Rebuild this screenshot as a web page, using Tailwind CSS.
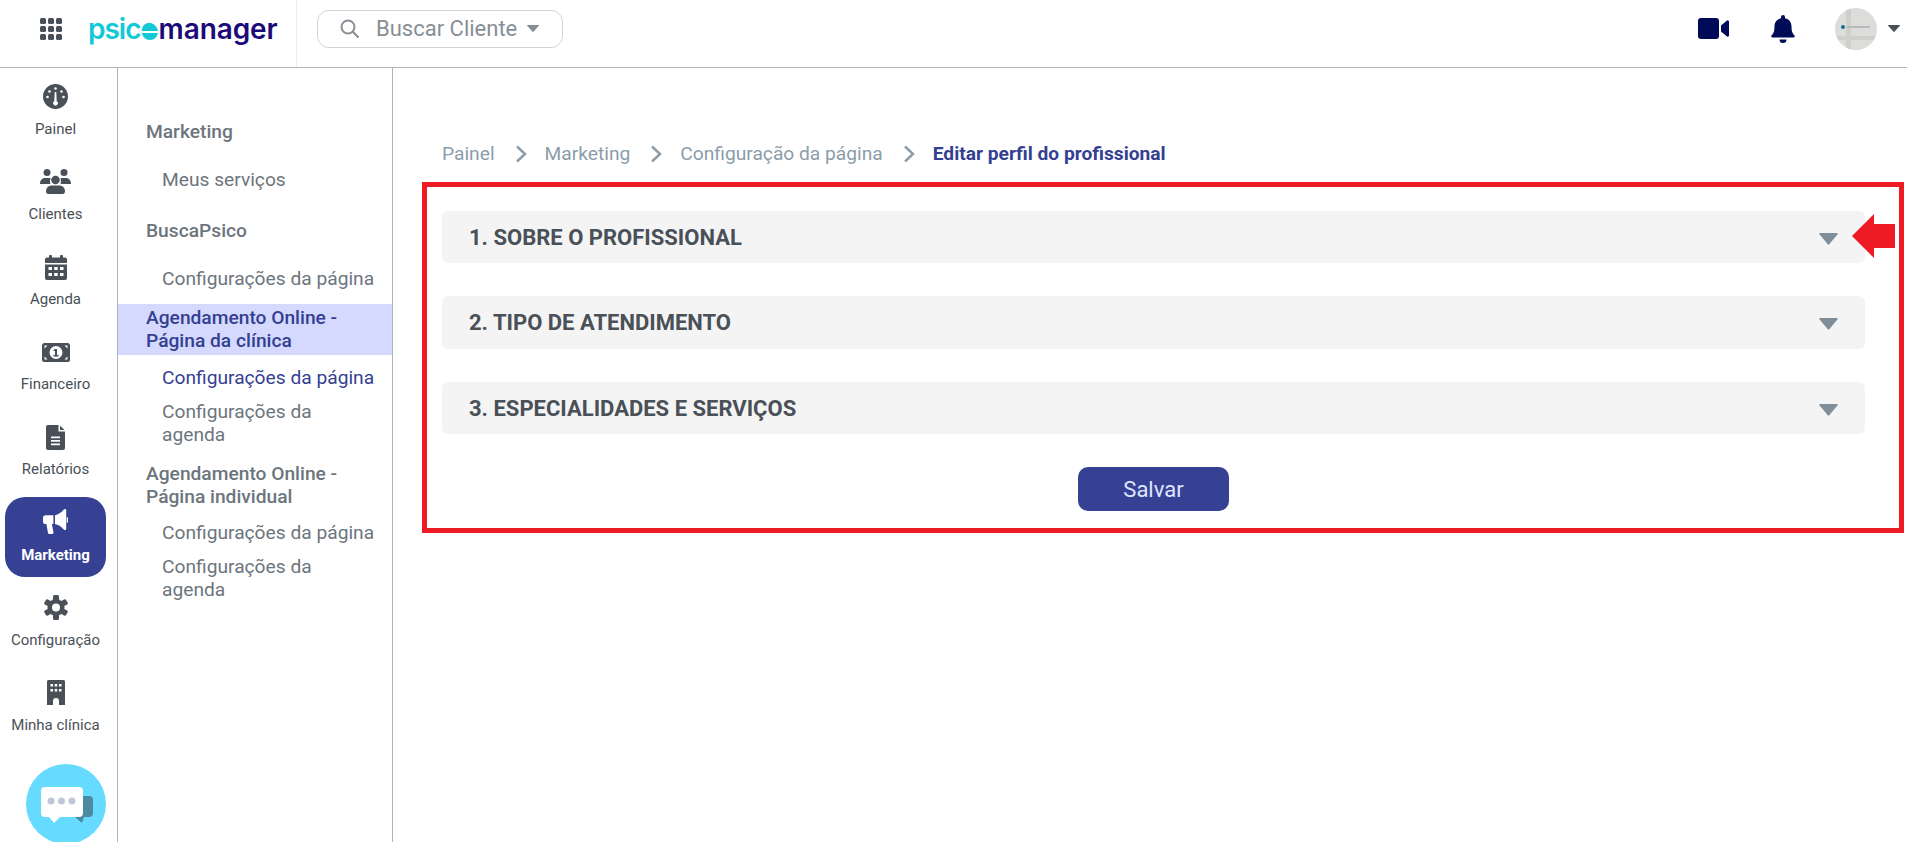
<!DOCTYPE html>
<html lang="pt-BR">
<head>
  <meta charset="UTF-8" />
  <title>PsicoManager – Editar perfil do profissional</title>
  <script src="https://cdn.jsdelivr.net/npm/@tailwindcss/browser@4"></script>
</head>
<body class="bg-white font-['Roboto',sans-serif] text-[#495057] h-[842px] overflow-hidden">

  <!-- top bar -->
  <header class="h-[68px] flex items-center border-b border-[#adb5bd] bg-white">
    <div class="w-[297px] h-full flex items-center border-r border-[#e9ecef] shrink-0 pb-[9px]">
      <svg class="ml-[40px] w-[22px] h-[22px]" viewBox="0 0 22 22" fill="#495057">
        <rect x="0" y="0" width="6" height="6" rx="1.5"/><rect x="8" y="0" width="6" height="6" rx="1.5"/><rect x="16" y="0" width="6" height="6" rx="1.5"/>
        <rect x="0" y="8" width="6" height="6" rx="1.5"/><rect x="8" y="8" width="6" height="6" rx="1.5"/><rect x="16" y="8" width="6" height="6" rx="1.5"/>
        <rect x="0" y="16" width="6" height="6" rx="1.5"/><rect x="8" y="16" width="6" height="6" rx="1.5"/><rect x="16" y="16" width="6" height="6" rx="1.5"/>
      </svg>
      <div class="ml-[26px] flex items-baseline font-['Inter',sans-serif] font-semibold text-[28px] leading-none">
        <span class="text-[#12c9d8] tracking-[-1px]">psic</span>
        <span class="relative text-[#12c9d8] mr-[1px]">o<span class="absolute left-[1px] top-[9px] w-[16px] h-[16px] rounded-full bg-[#12c9d8] flex items-center"><span class="block w-full h-[2px] bg-white"></span></span></span>
        <span class="text-[#1c0a78] tracking-[-0.1px]">manager</span>
      </div>
    </div>
    <button class="ml-[20px] mb-[10px] w-[246px] h-[38px] border border-[#ced4da] rounded-[12px] flex items-center text-[#868e96] text-[22px]">
      <svg class="ml-[22px] w-[19px] h-[19px]" viewBox="0 0 19 19" fill="none" stroke="#868e96" stroke-width="2"><circle cx="8" cy="8" r="6.5"/><path d="M12.8 12.8 18 18" stroke-linecap="round"/></svg>
      <span class="ml-[17px]">Buscar Cliente</span>
      <svg class="ml-[10px] w-[12px] h-[7px]" viewBox="0 0 12 7" fill="#868e96"><path d="M0.5 0h11a.5.5 0 0 1 .4.8L6.4 6.8a.5.5 0 0 1-.8 0L.1.8A.5.5 0 0 1 .5 0z"/></svg>
    </button>
    <div class="ml-auto mb-[10px] flex items-center">
      <svg class="w-[31px] h-[21px]" viewBox="0 0 31 21" fill="#000b57"><rect x="0" y="0" width="21" height="21" rx="3"/><path d="M23 7.5 29 2.6a1.2 1.2 0 0 1 2 .9v14a1.2 1.2 0 0 1-2 .9L23 13.5z"/></svg>
      <svg class="ml-[42px] w-[24px] h-[28px]" viewBox="0 0 24 28" fill="#000b57"><path d="M12 0a2 2 0 0 1 2 2v1.200c4 .8 6.500 4 6.500 8.300 0 5.800 1.600 7.400 3 9 .5.6.5 2-1 2H1.500c-1.500 0-1.500-1.400-1-2 1.400-1.600 3-3.200 3-9 0-4.300 2.500-7.500 6.500-8.300V2a2 2 0 0 1 2-2z"/><path d="M8.500 24.500h7a3.500 3.500 0 0 1-7 0z"/></svg>
      <div class="ml-[40px] w-[42px] h-[42px] rounded-full bg-[#dcdcda] relative overflow-hidden">
        <div class="absolute left-[11px] top-0 w-[5px] h-full bg-[#cfcfcd]"></div>
        <div class="absolute left-0 top-[28px] w-full h-[4px] bg-[#cfcfcd]"></div>
        <div class="absolute left-[6px] top-[17px] w-[4px] h-[4px] rounded-full bg-[#0f6f8c]"></div>
        <div class="absolute left-[12px] top-[18px] w-[23px] h-[2px] bg-[#b9b9b9]"></div>
      </div>
      <svg class="ml-[11px] mr-[7px] w-[12px] h-[7px]" viewBox="0 0 12 7" fill="#495057"><path d="M0.5 0h11a.5.5 0 0 1 .4.8L6.4 6.8a.5.5 0 0 1-.8 0L.1.8A.5.5 0 0 1 .5 0z"/></svg>
    </div>
  </header>

  <div class="flex h-[774px]">
    <!-- icon rail -->
    <nav class="w-[118px] shrink-0 border-r border-[#adb5bd] px-[5px] pt-[4px] flex flex-col gap-[5px] text-[15px] leading-[20px]">
      <a class="h-[80px] w-[101px] shrink-0 pt-[12px] flex flex-col items-center">
        <span class="h-6 flex items-center justify-center">
          <svg class="w-[25px] h-[25px]" viewBox="0 0 25 25"><circle cx="12.500" cy="12.500" r="12.500" fill="#495057"/><g fill="#fff"><circle cx="12.500" cy="4.500" r="1.300"/><circle cx="6.500" cy="7.500" r="1.300"/><circle cx="18.500" cy="7.500" r="1.300"/><circle cx="4.500" cy="13" r="1.300"/><circle cx="20.500" cy="13" r="1.300"/><path d="M11.700 8h1.600l.4 9.200a2.300 2.300 0 1 1-2.400 0z"/></g></svg>
        </span>
        <span class="mt-[11px]">Painel</span>
      </a>
      <a class="h-[80px] w-[101px] shrink-0 pt-[12px] flex flex-col items-center">
        <span class="h-6 flex items-center justify-center">
          <svg class="w-[31px] h-[25px]" viewBox="0 0 31 25" fill="#495057"><circle cx="7" cy="3.500" r="3.500"/><circle cx="24" cy="3.500" r="3.500"/><circle cx="15.500" cy="11" r="4.300"/><path d="M0 15c0-3.500 2-6 5-6h4c.6 0 1.200.1 1.700.4C10 10.500 9.700 12.500 10.500 15z"/><path d="M31 15c0-3.500-2-6-5-6h-4c-.6 0-1.200.1-1.700.4.700 1.100 1 3.100.2 5.600z"/><path d="M6 22.500C6 18.500 9 16.500 11.500 16.500h8c2.500 0 5.500 2 5.500 6 0 1.400-1 2.500-2.200 2.500H8.200C7 25 6 23.900 6 22.500z"/></svg>
        </span>
        <span class="mt-[11px]">Clientes</span>
      </a>
      <a class="h-[80px] w-[101px] shrink-0 pt-[13px] flex flex-col items-center">
        <span class="h-6 flex items-center justify-center">
          <svg class="w-[22px] h-[25px]" viewBox="0 0 22 25" fill="#495057"><rect x="4" y="0" width="3" height="4" rx="1"/><rect x="15" y="0" width="3" height="4" rx="1"/><path d="M2 2.500h18a2 2 0 0 1 2 2V8H0V4.500a2 2 0 0 1 2-2z"/><path d="M0 9.500h22V23a2 2 0 0 1-2 2H2a2 2 0 0 1-2-2z"/><g fill="#fff"><rect x="3.500" y="12" width="3.500" height="3"/><rect x="9.200" y="12" width="3.500" height="3"/><rect x="15" y="12" width="3.500" height="3"/><rect x="3.500" y="18" width="3.500" height="3"/><rect x="9.200" y="18" width="3.500" height="3"/><rect x="15" y="18" width="3.500" height="3"/></g></svg>
        </span>
        <span class="mt-[10px]">Agenda</span>
      </a>
      <a class="h-[80px] w-[101px] shrink-0 pt-[13px] flex flex-col items-center">
        <span class="h-6 flex items-center justify-center">
          <svg class="w-[28px] h-[19px]" viewBox="0 0 28 19"><rect width="28" height="19" rx="2.500" fill="#495057"/><circle cx="14" cy="9.500" r="6.500" fill="#fff"/><path d="M13 6h2v6h1.500v1.500h-5V12H13V8h-1.500V7z" fill="#495057"/><g fill="#fff"><path d="M2.500 2.500h3l-3 3z"/><path d="M25.500 2.500h-3l3 3z"/><path d="M2.500 16.500h3l-3-3z"/><path d="M25.500 16.500h-3l3-3z"/></g></svg>
        </span>
        <span class="mt-[10px]">Financeiro</span>
      </a>
      <a class="h-[80px] w-[101px] shrink-0 pt-[13px] flex flex-col items-center">
        <span class="h-6 flex items-center justify-center">
          <svg class="w-[19px] h-[25px]" viewBox="0 0 19 25"><path d="M2 0h10.500v6.500H19V23a2 2 0 0 1-2 2H2a2 2 0 0 1-2-2V2a2 2 0 0 1 2-2z" fill="#495057"/><path d="M14 0.500 18.500 5H14z" fill="#495057"/><g fill="#fff"><rect x="5" y="11.500" width="9" height="1.700"/><rect x="5" y="15" width="9" height="1.700"/><rect x="5" y="18.500" width="9" height="1.700"/></g></svg>
        </span>
        <span class="mt-[10px]">Relatórios</span>
      </a>
      <a class="h-[80px] w-[101px] shrink-0 pt-[13px] flex flex-col items-center rounded-[20px] bg-[#364194] text-white font-bold">
        <span class="h-6 flex items-center justify-center">
          <svg class="w-[25px] h-[26px]" viewBox="0 0 24 25" fill="#fff"><path d="M21 0c.8 0 1.300.6 1.300 1.300V19c0 .9-.5 1.300-1.300 1.300-.4 0-.7-.2-1-.5-2.500-3-5.500-4.800-8.500-5.300V6C14.500 5.500 17.500 3.500 20 .5c.3-.3.6-.5 1-.5z"/><path d="M2.500 6H10v8.500H8.500l1.500 7.500c.2 1-.4 2-1.500 2H6.500c-1 0-1.600-.6-1.800-1.500L3.300 14.500H2.500A2.500 2.500 0 0 1 0 12V8.500A2.500 2.500 0 0 1 2.500 6z"/><rect x="22.800" y="8" width="1.200" height="5"/></svg>
        </span>
        <span class="mt-[11px]">Marketing</span>
      </a>
      <a class="h-[80px] w-[101px] shrink-0 pt-[13px] flex flex-col items-center">
        <span class="h-6 flex items-center justify-center">
          <svg class="w-[24px] h-[25px]" viewBox="0 0 24 25"><g fill="#495057"><circle cx="12" cy="12.500" r="8.500"/><rect x="9" y="0" width="6" height="25" rx="1.500"/><rect x="9" y="0" width="6" height="25" rx="1.500" transform="rotate(60 12 12.500)"/><rect x="9" y="0" width="6" height="25" rx="1.500" transform="rotate(120 12 12.500)"/></g><circle cx="12" cy="12.500" r="4" fill="#fff"/></svg>
        </span>
        <span class="mt-[11px]">Configuração</span>
      </a>
      <a class="h-[80px] w-[101px] shrink-0 pt-[13px] flex flex-col items-center">
        <span class="h-6 flex items-center justify-center">
          <svg class="w-[18px] h-[25px]" viewBox="0 0 18 25"><path d="M1.500 0h15A1.500 1.500 0 0 1 18 1.500V25h-6v-4a3 3 0 0 0-6 0v4H0V1.500A1.500 1.500 0 0 1 1.500 0z" fill="#495057"/><g fill="#fff"><rect x="3.500" y="4" width="2.500" height="2.500"/><rect x="7.700" y="4" width="2.500" height="2.500"/><rect x="12" y="4" width="2.500" height="2.500"/><rect x="3.500" y="9" width="2.500" height="2.500"/><rect x="7.700" y="9" width="2.500" height="2.500"/><rect x="12" y="9" width="2.500" height="2.500"/></g></svg>
        </span>
        <span class="mt-[11px]">Minha clínica</span>
      </a>
      <svg class="mt-[12px] ml-[21px] w-[80px] h-[80px] shrink-0" viewBox="0 0 80 80">
        <circle cx="40" cy="40" r="40" fill="#66dbff"/>
        <path d="M30 32h33a4 4 0 0 1 4 4v13a4 4 0 0 1-4 4h-5l-2 6-7-6H30z" fill="#4b8a9f"/>
        <path d="M19 23h34a4 4 0 0 1 4 4v22a4 4 0 0 1-4 4H34l-6 6-5-6h-4a4 4 0 0 1-4-4V27a4 4 0 0 1 4-4z" fill="#fff"/>
        <circle cx="25" cy="37" r="3.500" fill="#bfc8d9"/><circle cx="35.500" cy="37" r="3.500" fill="#bfc8d9"/><circle cx="46" cy="37" r="3.500" fill="#bfc8d9"/>
      </svg>
    </nav>

    <!-- sub menu -->
    <aside class="w-[275px] shrink-0 border-r border-[#adb5bd] pt-[52px] text-[19.2px] leading-[24px] text-[#6c757d]">
      <h3 class="pl-[28px] font-medium">Marketing</h3>
      <a class="block pl-[44px] mt-[24px]">Meus serviços</a>
      <h3 class="pl-[28px] mt-[27px] font-medium">BuscaPsico</h3>
      <a class="block pl-[44px] mt-[24px]">Configurações da página</a>
      <h3 class="pl-[28px] mt-[13px] h-[51px] pt-[2px] leading-[23px] font-medium bg-[#d4d9fd] text-[#343f92]">Agendamento Online -<br>Página da clínica</h3>
      <a class="block pl-[44px] mt-[11px] text-[#343f92]">Configurações da página</a>
      <a class="block pl-[44px] mt-[10px] leading-[23px]">Configurações da<br>agenda</a>
      <h3 class="pl-[28px] mt-[16px] leading-[23px] font-medium">Agendamento Online -<br>Página individual</h3>
      <a class="block pl-[44px] mt-[13px]">Configurações da página</a>
      <a class="block pl-[44px] mt-[10px] leading-[23px]">Configurações da<br>agenda</a>
    </aside>

    <!-- content -->
    <main class="flex-1 pt-[74px]">
      <ol class="pl-[49px] flex items-center h-6 text-[19.2px] text-[#8b9daa]">
        <li>Painel</li>
        <li class="ml-[20px] mr-[18px]"><svg class="w-[12px] h-[18px]" viewBox="0 0 12 18" fill="none" stroke="#8b9daa" stroke-width="2.500"><path d="M2 1.500 10 9l-8 7.500"/></svg></li>
        <li>Marketing</li>
        <li class="ml-[20px] mr-[18px]"><svg class="w-[12px] h-[18px]" viewBox="0 0 12 18" fill="none" stroke="#8b9daa" stroke-width="2.500"><path d="M2 1.500 10 9l-8 7.500"/></svg></li>
        <li>Configuração da página</li>
        <li class="ml-[20px] mr-[18px]"><svg class="w-[12px] h-[18px]" viewBox="0 0 12 18" fill="none" stroke="#8b9daa" stroke-width="2.500"><path d="M2 1.500 10 9l-8 7.500"/></svg></li>
        <li class="font-bold text-[#343f92]">Editar perfil do profissional</li>
      </ol>

      <section class="relative ml-[29px] mt-[16px] w-[1482px] h-[351px] border-[5px] border-[#ed1c24] pt-[24px] pl-[15px] pr-[34px]">
        <div class="h-[52px] rounded-[6px] bg-[#f4f4f4] flex items-center justify-between pl-[27px] pr-[27px] text-[22px] font-bold">
          <span>1. SOBRE O PROFISSIONAL</span>
          <svg class="mt-[3px] w-[19px] h-[12px]" viewBox="0 0 19 12" fill="#7f8e99"><path d="M1 0h17a.8.8 0 0 1 .6 1.300L10 11.500a.7.7 0 0 1-1 0L.4 1.300A.8.8 0 0 1 1 0z"/></svg>
        </div>
        <div class="mt-[33px] h-[53px] rounded-[6px] bg-[#f4f4f4] flex items-center justify-between pl-[27px] pr-[27px] text-[22px] font-bold">
          <span>2. TIPO DE ATENDIMENTO</span>
          <svg class="mt-[3px] w-[19px] h-[12px]" viewBox="0 0 19 12" fill="#7f8e99"><path d="M1 0h17a.8.8 0 0 1 .6 1.300L10 11.500a.7.7 0 0 1-1 0L.4 1.300A.8.8 0 0 1 1 0z"/></svg>
        </div>
        <div class="mt-[33px] h-[52px] rounded-[6px] bg-[#f4f4f4] flex items-center justify-between pl-[27px] pr-[27px] text-[22px] font-bold">
          <span>3. ESPECIALIDADES E SERVIÇOS</span>
          <svg class="mt-[3px] w-[19px] h-[12px]" viewBox="0 0 19 12" fill="#7f8e99"><path d="M1 0h17a.8.8 0 0 1 .6 1.300L10 11.500a.7.7 0 0 1-1 0L.4 1.300A.8.8 0 0 1 1 0z"/></svg>
        </div>
        <div class="mt-[33px] flex justify-center">
          <button class="w-[151px] h-[44px] rounded-[10px] bg-[#364194] text-[#dfe6ff] text-[22px]">Salvar</button>
        </div>
        <svg class="absolute left-[1425px] top-[27px] w-[43px] h-[44px]" viewBox="0 0 43 44" fill="#ed1c24"><path d="M0 22 22 0v10h21v24H22v10z"/></svg>
      </section>
    </main>
  </div>
</body>
</html>
